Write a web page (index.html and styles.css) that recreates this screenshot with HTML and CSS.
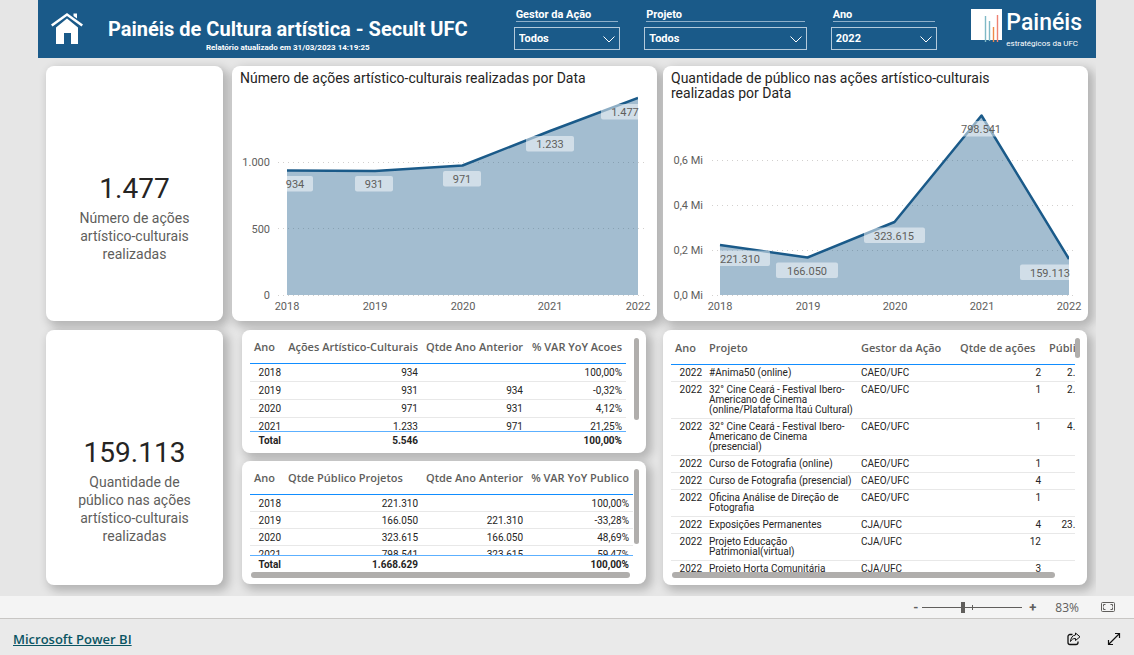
FILE: index.html
```html
<!DOCTYPE html>
<html lang="pt-BR">
<head>
<meta charset="utf-8">
<title>Painéis de Cultura artística - Secult UFC</title>
<link rel="stylesheet" href="styles.css">
</head>
<body>
<main class="report">
  <header class="topbar">
    <a class="home" href="#" aria-label="Início">
      <svg viewBox="0 0 32 32" width="32" height="32" fill="#fff"><path d="M16 5.500 27 14.500V31h-7V20h-7v11H5V14.500z"/><path d="M0 11.500 16 0l16 11.500-1.500 2L16 3 1.500 13.500z"/><path d="M22.500 0.500h3.500v5l-3.500-2.500z"/></svg>
    </a>
    <div class="heading">
      <h1>Painéis de Cultura artística - Secult UFC</h1>
      <p>Relatório atualizado em 31/03/2023 14:19:25</p>
    </div>
    <div class="filters">
      <div class="filter">
        <label for="gestor">Gestor da Ação</label>
        <div class="pick"><select id="gestor"><option>Todos</option></select><svg class="chev" viewBox="0 0 12 7"><path d="M.5.500 6 6 11.500.500"/></svg></div>
      </div>
      <div class="filter wide">
        <label for="projeto">Projeto</label>
        <div class="pick"><select id="projeto"><option>Todos</option></select><svg class="chev" viewBox="0 0 12 7"><path d="M.5.500 6 6 11.500.500"/></svg></div>
      </div>
      <div class="filter">
        <label for="ano">Ano</label>
        <div class="pick"><select id="ano"><option>2022</option></select><svg class="chev" viewBox="0 0 12 7"><path d="M.5.500 6 6 11.500.500"/></svg></div>
      </div>
    </div>
    <div class="brand">
      <svg viewBox="0 0 31 34" width="31" height="34"><path fill="#fff" d="M0 1h31v31H0z"/><g stroke-width="1.400"><path stroke="#7fb9c6" d="M14.500 8v26M18.500 13v20"/><path stroke="#ee8a4a" d="M22.500 19v15"/><path stroke="#ef8172" d="M26.500 7v27"/></g></svg>
      <div class="brand-text"><strong>Painéis</strong><span>estratégicos da UFC</span></div>
    </div>
  </header>

  <div class="board">
    <section class="card kpi"><strong>1.477</strong><p>Número de ações artístico-culturais realizadas</p></section>

    <section class="card chart">
      <h2>Número de ações artístico-culturais realizadas por Data</h2>
      <svg viewBox="232 91 425 230">
        <clipPath id="plot1"><path d="M286 91h352v204H286z"/></clipPath>
        <g class="grid"><path d="M278 162.500h368M278 228.500h368M278 295.500h368"/></g>
        <path class="area" d="M287 170.500 375 171 462.500 165.500 550 131 638 98V295H287z"/>
        <g clip-path="url(#plot1)">
          <path class="line" d="M287 170.500 375 171 462.500 165.500 550 131 638 98"/>
          <g class="tag"><rect x="275" y="176" width="38" height="15.500" rx="2"/><rect x="355" y="176" width="38" height="15.500" rx="2"/><rect x="443" y="171" width="38" height="15.500" rx="2"/><rect x="526" y="136" width="48" height="15.500" rx="2"/><rect x="601" y="104" width="48" height="15.500" rx="2"/></g>
        </g>
        <g class="mid"><text x="295" y="188">934</text><text x="374" y="188">931</text><text x="462" y="183">971</text><text x="550" y="148">1.233</text><text x="625" y="116">1.477</text>
        <text x="287" y="310">2018</text><text x="375" y="310">2019</text><text x="463" y="310">2020</text><text x="550" y="310">2021</text><text x="638" y="310">2022</text></g>
        <g class="end"><text x="270" y="166">1.000</text><text x="270" y="233">500</text><text x="270" y="299">0</text></g>
      </svg>
    </section>

    <section class="card chart">
      <h2>Quantidade de público nas ações artístico-culturais realizadas por Data</h2>
      <svg viewBox="663 106 425 215">
        <clipPath id="plot2"><path d="M719 106h350v189H719z"/></clipPath>
        <clipPath id="under2"><path d="M720 245 807.500 257.500 894.500 222 981.500 115.500 1069 259V295H720z"/></clipPath>
        <g class="grid"><path d="M712 160.500h364M712 205.500h364M712 250.500h364M712 295.500h364"/></g>
        <path class="area" d="M720 245 807.500 257.500 894.500 222 981.500 115.500 1069 259V295H720z"/>
        <g clip-path="url(#plot2)">
          <path class="line" d="M720 245 807.500 257.500 894.500 222 981.500 115.500 1069 259"/>
          <g class="tag"><rect x="708" y="250.500" width="62" height="15.500" rx="2"/><rect x="776" y="262.500" width="62" height="15.500" rx="2"/><rect x="864" y="227.500" width="61" height="15.500" rx="2"/><rect x="951" y="121" width="61" height="15.500" rx="2"/><rect x="1020" y="264.500" width="61" height="15.500" rx="2"/></g>
        </g>
        <g class="mid"><text x="740" y="263">221.310</text><text x="807" y="275">166.050</text><text x="894" y="240">323.615</text><text x="981" y="133">798.541</text><text x="1050" y="277">159.113</text>
        <text x="720" y="310">2018</text><text x="808" y="310">2019</text><text x="895" y="310">2020</text><text x="982" y="310">2021</text><text x="1069" y="310">2022</text></g>
        <g class="end"><text x="703" y="164">0,6 Mi</text><text x="703" y="209">0,4 Mi</text><text x="703" y="254">0,2 Mi</text><text x="703" y="299">0,0 Mi</text></g>
      </svg>
    </section>

    <section class="card kpi"><strong>159.113</strong><p>Quantidade de público nas ações artístico-culturais realizadas</p></section>

    <div class="stack">
      <section class="card panel short">
        <div class="view">
          <table class="grid-table actions">
            <colgroup><col class="c-year"><col class="c-main"><col class="c-prev"><col></colgroup>
            <thead><tr><th class="l">Ano</th><th>Ações Artístico-Culturais</th><th>Qtde Ano Anterior</th><th>% VAR YoY Acoes</th></tr></thead>
            <tbody>
              <tr><td>2018</td><td>934</td><td></td><td>100,00%</td></tr>
              <tr><td>2019</td><td>931</td><td>934</td><td>-0,32%</td></tr>
              <tr><td>2020</td><td>971</td><td>931</td><td>4,12%</td></tr>
              <tr><td>2021</td><td>1.233</td><td>971</td><td>21,25%</td></tr>
            </tbody>
            <tfoot><tr><td>Total</td><td>5.546</td><td></td><td>100,00%</td></tr></tfoot>
          </table>
        </div>
        <div class="vbar"><i class="thumb-a"></i></div>
      </section>
      <section class="card panel short tight">
        <div class="view">
          <table class="grid-table audience">
            <colgroup><col class="c-year"><col class="c-main"><col class="c-prev"><col></colgroup>
            <thead><tr><th class="l">Ano</th><th class="l">Qtde Público Projetos</th><th>Qtde Ano Anterior</th><th>% VAR YoY Publico</th></tr></thead>
            <tbody>
              <tr><td>2018</td><td>221.310</td><td></td><td>100,00%</td></tr>
              <tr><td>2019</td><td>166.050</td><td>221.310</td><td>-33,28%</td></tr>
              <tr><td>2020</td><td>323.615</td><td>166.050</td><td>48,69%</td></tr>
              <tr><td>2021</td><td>798.541</td><td>323.615</td><td>59,47%</td></tr>
            </tbody>
            <tfoot><tr><td>Total</td><td>1.668.629</td><td></td><td>100,00%</td></tr></tfoot>
          </table>
        </div>
        <div class="vbar"><i class="thumb-b"></i></div>
        <div class="hbar"></div>
      </section>
    </div>

    <section class="card panel tall">
      <div class="view">
        <table class="grid-table projects">
          <colgroup><col class="c-year"><col class="c-proj"><col class="c-gest"><col class="c-qtd"><col class="c-pub"></colgroup>
          <thead><tr><th>Ano</th><th>Projeto</th><th>Gestor da Ação</th><th>Qtde de ações</th><th>Público</th></tr></thead>
          <tbody>
            <tr><td>2022</td><td>#Anima50 (online)</td><td>CAEO/UFC</td><td>2</td><td>2.7</td></tr>
            <tr><td>2022</td><td>32° Cine Ceará - Festival Ibero-<br>Americano de Cinema<br>(online/Plataforma Itaú Cultural)</td><td>CAEO/UFC</td><td>1</td><td>2.8</td></tr>
            <tr><td>2022</td><td>32° Cine Ceará - Festival Ibero-<br>Americano de Cinema<br>(presencial)</td><td>CAEO/UFC</td><td>1</td><td>4.8</td></tr>
            <tr><td>2022</td><td>Curso de Fotografia (online)</td><td>CAEO/UFC</td><td>1</td><td></td></tr>
            <tr><td>2022</td><td>Curso de Fotografia (presencial)</td><td>CAEO/UFC</td><td>4</td><td></td></tr>
            <tr><td>2022</td><td>Oficina Análise de Direção de<br>Fotografia</td><td>CAEO/UFC</td><td>1</td><td></td></tr>
            <tr><td>2022</td><td>Exposições Permanentes</td><td>CJA/UFC</td><td>4</td><td>23.7</td></tr>
            <tr><td>2022</td><td>Projeto Educação<br>Patrimonial(virtual)</td><td>CJA/UFC</td><td>12</td><td></td></tr>
            <tr><td>2022</td><td>Projeto Horta Comunitária</td><td>CJA/UFC</td><td>3</td><td>3</td></tr>
          </tbody>
        </table>
      </div>
      <div class="vbar"><i class="thumb-c"></i></div>
      <div class="hbar"></div>
    </section>
  </div>
</main>

<div class="zoombar">
  <button type="button" class="step" aria-label="Reduzir">-</button>
  <div class="slider"><input type="range" min="10" max="400" value="168" aria-label="Zoom"><i></i></div>
  <button type="button" class="step" aria-label="Ampliar">+</button>
  <span class="pct">83%</span>
  <button type="button" class="fit" aria-label="Ajustar à página"><svg viewBox="0 0 14 10" width="14" height="10" fill="none" stroke="#605e5c"><rect x=".5" y=".5" width="13" height="9" rx="1"/><path d="M4.500 2.500h-2v2M9.500 2.500h2v2M4.500 7.500h-2v-2M9.500 7.500h2v-2"/></svg></button>
</div>
<footer class="footer">
  <a href="#">Microsoft Power BI</a>
  <div class="tools">
    <button type="button" aria-label="Compartilhar"><svg viewBox="0 0 14 14" width="14" height="14" fill="none" stroke="#111" stroke-linejoin="round"><path stroke-width="1.300" d="M5.500 2.500H3a2 2 0 0 0-2 2v6a2 2 0 0 0 2 2h6a2 2 0 0 0 2-2V9.500"/><path d="M8.500 1 13 4.800 8.500 8.500V6.500C6 6.500 4.800 7.300 3.500 9.500 3.700 6 5.500 3.300 8.500 3z"/></svg></button>
    <button type="button" aria-label="Tela inteira"><svg viewBox="0 0 14 14" width="14" height="14" fill="none" stroke="#111" stroke-width="1.200"><path d="M1.500 12.500l11-11M8 1.500h4.500V6M1.500 8v4.500H6"/></svg></button>
  </div>
</footer>
</body>
</html>
```
FILE: styles.css
```css
* { box-sizing: border-box; }
body { margin: 0; background: #e6e6e6; font-family: Roboto, "Liberation Sans", sans-serif; color: #252423; }
h1, h2, p { margin: 0; font-weight: 400; }
button { border: 0; padding: 0; background: none; font: inherit; color: inherit; display: flex; }

.report { margin: 0 38px; overflow: hidden; padding-bottom: 11px; }
.topbar { display: flex; align-items: flex-start; background: #1a5a89; color: #fff; height: 58px; padding: 8px 14px 0 13px; }
.home { display: block; margin-top: 5px; }
.home svg { display: block; }
.heading { margin: 9px 0 0 25px; text-align: center; }
.heading h1 { font-size: 20px; line-height: 24px; font-weight: 700; white-space: nowrap; }
.heading p { font-size: 8px; line-height: 12px; font-weight: 700; margin-top: 1px; }
.filters { display: flex; flex: 1; justify-content: space-between; gap: 24px; margin-left: 46px; }
.filter { flex: 107; }
.filter.wide { flex: 163; }
.filter label { display: block; margin: 0 2px 5px; font-size: 11px; line-height: 13px; font-weight: 700; border-bottom: 1px solid #8fb0ca; }
.pick { position: relative; }
.pick select { appearance: none; display: block; width: 100%; height: 23px; padding: 0 4px; border: 1px solid #b4cadb; border-radius: 0; background: transparent; color: #fff; font: 700 11px Roboto, sans-serif; }
.chev { position: absolute; right: 5px; top: 9px; width: 12px; height: 7px; fill: none; stroke: #fff; pointer-events: none; }
.brand { display: flex; gap: 4px; margin-left: 34px; }
.brand-text { display: flex; flex-direction: column; }
.brand-text strong { font-size: 23px; line-height: 30px; font-weight: 500; }
.brand-text span { font-size: 8px; line-height: 12px; white-space: nowrap; }

.board { display: grid; grid-template-columns: 180fr 425fr 425fr; gap: 9px 6px; padding: 8px 8px 0; }
.card { background: #fff; border-radius: 8px; box-shadow: 4px 4px 10px 2px rgba(0, 0, 0, .22); min-width: 0; }
.kpi { min-height: 255px; margin-right: 3px; padding: 105px 20px 0; text-align: center; }
.kpi strong { display: block; font-size: 28px; line-height: 36px; font-weight: 400; margin-bottom: 2px; }
.kpi p { font-size: 14px; line-height: 18px; color: #605e5c; }
.chart { display: flex; flex-direction: column; justify-content: space-between; }
.chart h2 { font-size: 14px; line-height: 15px; padding: 5px 60px 0 8px; }
.chart svg { display: block; width: 100%; }
.chart text { font-size: 11px; fill: #605e5c; }
.mid { text-anchor: middle; }
.end { text-anchor: end; }
.grid path { stroke: #d2d0ce; stroke-dasharray: 1 4; }
.area { fill: #1a5a89; fill-opacity: .4; }
.line { fill: none; stroke: #1a5a89; stroke-width: 2.5; stroke-linejoin: round; }
.tag rect { fill: #fff; fill-opacity: .5; }

.stack { display: flex; flex-direction: column; gap: 8px; margin: 0 11px 0 10px; }
.panel { display: grid; grid-template-columns: minmax(0, 1fr) 6px; column-gap: 8px; align-content: start; padding: 8px 6px 5px 8px; }
.view { overflow: hidden; }
.short { height: 123px; }
.short .view { height: 111px; }
.tight { column-gap: 1px; }
.tight .view { height: 103px; }
.tall { column-gap: 0; margin-right: 1px; }
.tall .view { height: 234px; }
.vbar { display: flex; }
.vbar i { width: 5px; border-radius: 3px; background: #b0aeac; }
.thumb-a { height: 82px; }
.thumb-b { height: 75px; }
.thumb-c { height: 20px; }
.hbar { grid-column: 1; height: 6px; margin: 0 3px 0 1px; border-radius: 3px; background: #b0aeac; }
.tall .hbar { margin-right: 20px; }

.grid-table { border-spacing: 0; table-layout: fixed; width: 100%; font-size: 10px; line-height: 11px; }
.grid-table th, .grid-table td { text-align: right; vertical-align: top; white-space: nowrap; }
.grid-table th { height: 26px; padding: 1px 4px 0; font: 600 11px/15px "Open Sans", sans-serif; color: #605e5c; border-bottom: 1px solid #118dff; }
.grid-table .l { text-align: left; }
.grid-table td { padding: 3px 4px; border-bottom: 1px solid #e8e8e8; }
.grid-table td:first-child { padding-right: 3px; }
.grid-table tfoot { position: sticky; bottom: 0; background: #fff; }
.grid-table tfoot td { border-top: 1px solid #5cb0ff; border-bottom: 0; font-weight: 700; }
.audience td { padding-bottom: 2px; }
.c-year { width: 34px; }
.c-main { width: 138px; }
.c-prev { width: 105px; }
.projects { width: 414px; line-height: 10px; }
.grid-table.projects th { height: 27px; padding-top: 2px; }
.projects th, .projects td:nth-child(2), .projects td:nth-child(3) { text-align: left; }
.c-proj { width: 152px; }
.c-gest { width: 99px; }
.c-qtd { width: 89px; }
.c-pub { width: 40px; }

.zoombar { display: flex; align-items: center; justify-content: flex-end; height: 23px; padding-right: 19px; background: #f4f4f4; border-bottom: 1px solid #c8c6c4; color: #605e5c; font-size: 13px; }
.step { font-weight: 700; }
.slider { position: relative; width: 100px; height: 12px; margin: 0 7px 0 4px; }
.slider input { appearance: none; display: block; width: 100%; height: 12px; margin: 0; background: linear-gradient(#605e5c, #605e5c) center / 100% 1px no-repeat; }
.slider input::-webkit-slider-thumb { appearance: none; width: 4px; height: 11px; background: #605e5c; }
.slider i { position: absolute; left: 50%; top: 4px; width: 1px; height: 5px; background: #605e5c; }
.pct { margin: 0 22px 0 19px; font: 12px "Open Sans", sans-serif; }
.footer { display: flex; align-items: center; justify-content: space-between; min-height: 36px; padding: 3px 13px 0; background: #eaeaea; }
.footer a { color: #0b5563; font: 600 13px "Open Sans", sans-serif; }
.tools { display: flex; gap: 26px; }
```
